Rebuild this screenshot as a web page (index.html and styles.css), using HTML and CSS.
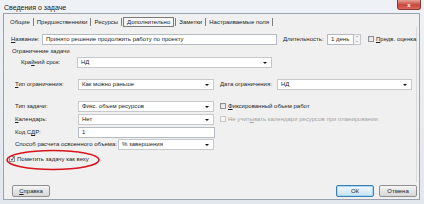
FILE: index.html
```html
<!DOCTYPE html>
<html>
<head>
<meta charset="utf-8">
<link rel="stylesheet" href="styles.css">
</head>
<body>
<div class="window">
  <div class="titlebar">
    <span class="title">Сведения о задаче</span>
    <span class="close">x</span>
  </div>
  <div class="client">
    <div class="tabs">
      <span class="tab">Общие</span><span class="sep"></span>
      <span class="tab">Предшественники</span><span class="sep"></span>
      <span class="tab">Ресурсы</span><span class="sep"></span>
      <span class="tab sel">Дополнительно</span><span class="sep"></span>
      <span class="tab">Заметки</span><span class="sep"></span>
      <span class="tab">Настраиваемые поля</span><span class="sep"></span>
    </div>
    <div class="panel">
      <div class="row r-name">
        <span class="lbl w-name"><u>Н</u>азвание:</span>
        <span class="field w-title">Принято решение продолжить работу по проекту</span>
        <span class="lbl w-dur">Длительность:</span>
        <span class="field w-durin">1 день</span>
        <span class="spin"><i class="up"></i><i class="dn"></i></span>
        <span class="cb"></span>
        <span class="lbl"><u>П</u>редв. оценка</span>
      </div>
      <div class="group">Ограничение задачи</div>
      <div class="row r-dead">
        <span class="lbl w-dead">Кра<u>й</u>ний срок:</span>
        <span class="field drop w-deadin">НД<i class="arr"></i></span>
      </div>
      <div class="row r-ctype">
        <span class="lbl w-l"><u>Т</u>ип ограничения:</span>
        <span class="field drop w-d">Как можно раньше<i class="arr"></i></span>
        <span class="lbl w-cdate">Дата ограничения:</span>
        <span class="field drop w-cdatein">НД<i class="arr"></i></span>
      </div>
      <div class="row r-ttype">
        <span class="lbl w-l">Тип задачи:</span>
        <span class="field drop w-d">Фикс. объем ресурсов<i class="arr"></i></span>
        <span class="cb"></span>
        <span class="lbl"><u>Ф</u>иксированный объем работ</span>
      </div>
      <div class="row r-cal">
        <span class="lbl w-l"><u>К</u>алендарь:</span>
        <span class="field drop w-d">Нет<i class="arr"></i></span>
        <span class="cb dis"></span>
        <span class="lbl dis">Не учит<u>ы</u>вать календари ресурсов при планировании</span>
      </div>
      <div class="row r-wbs">
        <span class="lbl w-l">Код С<u>Д</u>Р:</span>
        <span class="field w-wbs">1</span>
      </div>
      <div class="row r-ev">
        <span class="lbl w-ev">Способ расчета освоенного объема:</span>
        <span class="field drop w-evin">% завершения<i class="arr"></i></span>
      </div>
      <div class="row r-mile">
        <span class="cb checked">&#10003;</span>
        <span class="lbl">Пометить задачу как веху</span>
      </div>
      <svg class="ring" width="100" height="26" viewBox="0 0 100 26">
        <ellipse cx="49" cy="13" rx="46" ry="9.5" fill="none" stroke="#d8141c" stroke-width="1.6"/>
      </svg>
    </div>
    <div class="buttons">
      <span class="btn"><u>С</u>правка</span>
      <span class="spacer"></span>
      <span class="btn def">ОК</span>
      <span class="btn">Отмена</span>
    </div>
  </div>
</div>
</body>
</html>
```
FILE: styles.css
```css
* { box-sizing: border-box; }
html, body { margin: 0; padding: 0; }
body {
  width: 424px; height: 204px; overflow: hidden;
  font-family: "Liberation Sans", Arial, sans-serif;
  font-size: 6px; color: #1e1e1e;
  background: #e6eaef;
}
u { text-decoration: underline; }
.window {
  width: 424px; height: 204px;
  background: linear-gradient(#eef1f5, #e2e7ed);
  display: flex; flex-direction: column;
  padding: 0 4px 4px 3px;
}
.titlebar {
  height: 13px; flex: none;
  display: flex; align-items: flex-start; justify-content: space-between;
}
.title { font-size: 7px; color: #222; margin: 4px 0 0 1px; }
.close {
  width: 24px; height: 10px; margin-right: -1px;
  background: linear-gradient(#e2a49a, #c8473b 55%, #d86a5c);
  border: 1px solid #8a3a34; border-top: none;
  border-radius: 0 0 3px 3px;
  color: #fff; font-weight: bold; font-size: 6px;
  display: flex; align-items: center; justify-content: center;
}
.client {
  flex: 1; background: #f0f0f0;
  border: 1px solid #9aa3ad;
  display: flex; flex-direction: column;
  position: relative;
}
.tabs {
  height: 13px; flex: none;
  display: flex; align-items: center;
  padding: 2px 0 0 4px;
}
.tab { padding: 0 2px; line-height: 8px; }
.tab.sel { border: 1px solid #7a7a7a; background: #f6f6f6; padding: 0 3px; }
.sep { width: 1px; height: 8px; background: #7d7d7d; margin: 0 1px; }
.panel {
  height: 155px; flex: none;
  margin: 0 2px 0 1px;
  border-right: 1px solid #dadada;
  position: relative;
  padding-top: 5px;
}
.row { display: flex; align-items: center; height: 12px; }
.lbl { white-space: nowrap; flex: none; }
.lbl.dis { color: #a3a3a3; }
.field {
  flex: none; height: 11px; background: #fff;
  border: 1px solid #b5b9c0;
  padding-left: 3px; line-height: 9px;
  position: relative; white-space: nowrap;
}
.drop { border-color: #c6c8cc; }
.arr {
  position: absolute; right: 4px; top: 4px;
  width: 0; height: 0;
  border-left: 2px solid transparent; border-right: 2px solid transparent;
  border-top: 2px solid #111;
}
.spin {
  flex: none; width: 7px; height: 11px;
  border: 1px solid #c4c7cc; border-left: none;
  background: #f3f3f3;
  display: flex; flex-direction: column; align-items: center; justify-content: space-around;
  margin-right: 7px;
}
.spin i { width: 0; height: 0; border-left: 1.5px solid transparent; border-right: 1.5px solid transparent; }
.spin .up { border-bottom: 1.5px solid #8a8a8a; }
.spin .dn { border-top: 1.5px solid #8a8a8a; }
.cb {
  flex: none; width: 6px; height: 6px;
  border: 1px solid #8e8f8f;
  background: linear-gradient(135deg, #dcdcdc, #fafafa);
  margin-right: 2px;
  font-size: 6px; line-height: 4px; color: #2a4a7a; text-align: center;
}
.cb.dis { border-color: #c8c8c8; background: #f4f4f4; }
.cb.checked { background: #f7f7f7; font-weight: bold; }

.r-name { padding-left: 6px; margin-top: 1px; }
.w-name { width: 31px; }
.w-title { width: 235px; margin-right: 6px; }
.w-dur { width: 44px; }
.w-durin { width: 27px; }

.group { padding-left: 7px; margin-top: 2px; height: 9px; line-height: 9px; }
.r-dead { padding-left: 16px; }
.w-dead { width: 56px; }
.w-deadin { width: 195px; }

.r-ctype { padding-left: 10px; margin-top: 10px; }
.w-l { width: 63px; }
.w-d { width: 136px; margin-right: 6px; }
.w-cdate { width: 57px; }
.w-cdatein { width: 135px; }

.r-ttype { padding-left: 10px; margin-top: 10px; }
.r-cal { padding-left: 10px; margin-top: 1px; }
.r-wbs { padding-left: 10px; margin-top: 1px; }
.w-wbs { width: 137px; }
.r-ev { padding-left: 10px; }
.w-ev { width: 103px; }
.w-evin { width: 96px; }

.r-mile { padding-left: 4px; margin-top: 3px; }

.ring { position: absolute; left: -1px; top: 120px; }

.buttons {
  flex: 1; display: flex; align-items: flex-start;
  padding: 3px 2px 0 8px; gap: 5px;
}
.spacer { flex: 1; }
.btn {
  flex: none; width: 38px; height: 12px;
  border: 1px solid #8f8f8f; border-radius: 2px;
  background: linear-gradient(#f6f6f6, #e4e4e4 50%, #d8d8d8);
  display: flex; align-items: center; justify-content: center;
}
.btn.def { border-color: #3c7fb1; box-shadow: inset 0 0 0 1px #a6d8f5; background: linear-gradient(#f3f9fd, #dcecf8 50%, #c9e2f5); }
```
